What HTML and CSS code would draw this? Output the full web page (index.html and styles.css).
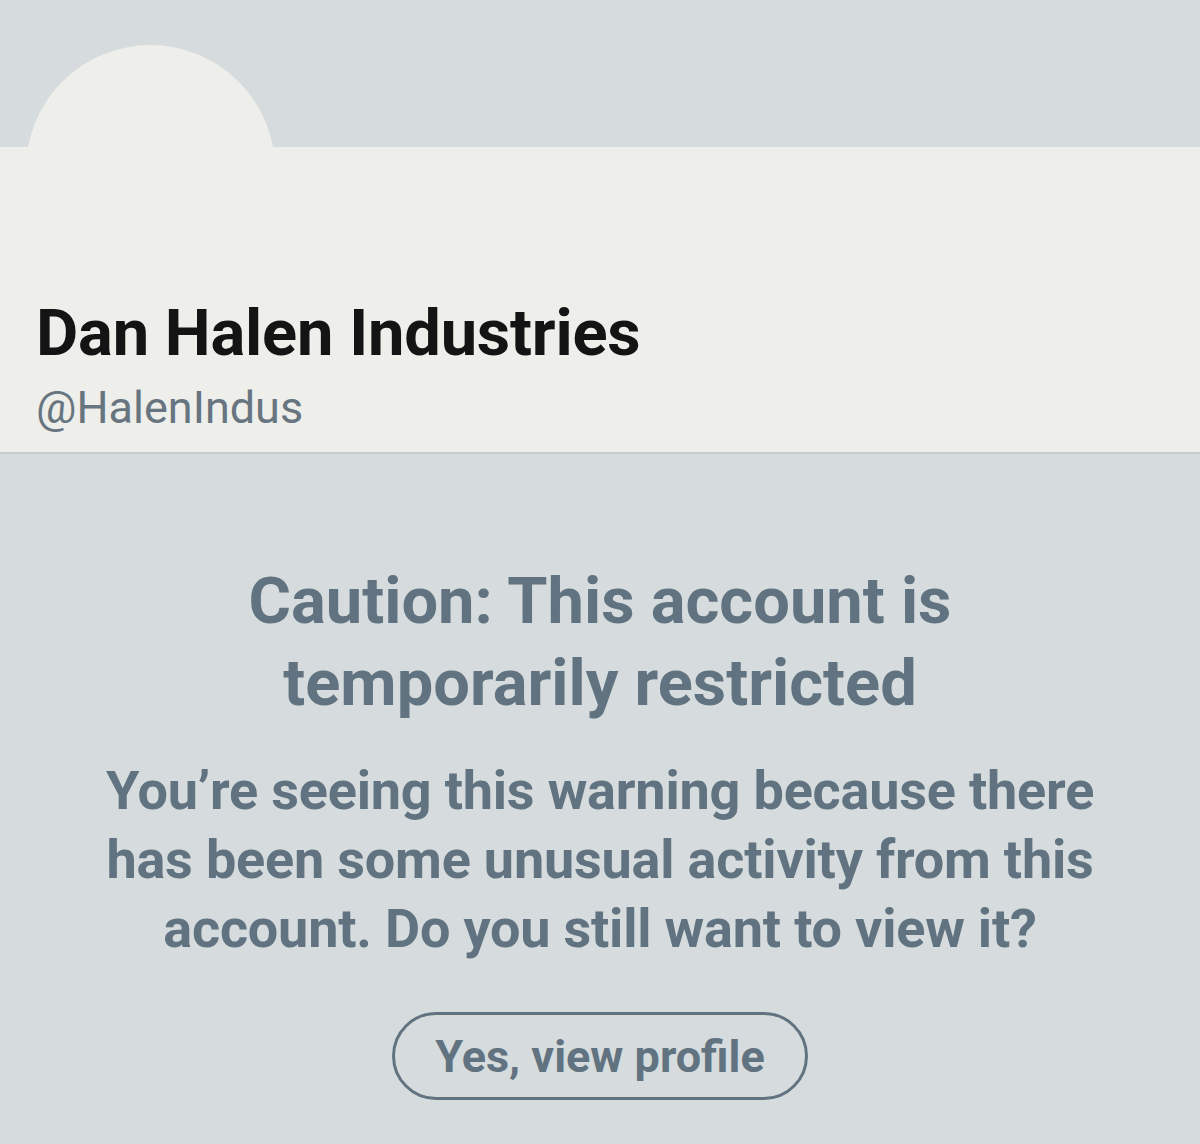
FILE: index.html
```html
<!DOCTYPE html>
<html>
<head>
<meta charset="utf-8">
<link rel="stylesheet" href="styles.css">
</head>
<body>
<div class="page">
  <div class="banner"></div>
  <div class="profile">
    <div class="avatar"></div>
    <h1 class="name">Dan Halen Industries</h1>
    <div class="handle">@HalenIndus</div>
  </div>
  <div class="warning">
    <h2 class="warn-title">Caution: This account is temporarily restricted</h2>
    <p class="warn-text">You’re seeing this warning because there has been some unusual activity from this account. Do you still want to view it?</p>
    <button class="view-btn">Yes, view profile</button>
  </div>
</div>
</body>
</html>
```
FILE: styles.css
```css
html, body {
  margin: 0;
  padding: 0;
  background: #d6dcdd;
}
body {
  font-family: Roboto, "Noto Sans", sans-serif;
  width: 1200px;
  height: 1144px;
  overflow: hidden;
}
.page {
  display: flex;
  flex-direction: column;
}
.banner {
  height: 147px;
  background: #d6dcdd;
}
.profile {
  position: relative;
  background: #eeeeea;
  height: 305px;
  border-bottom: 2px solid #c4cdd0;
  padding: 0 36px;
  display: flex;
  flex-direction: column;
}
.avatar {
  position: absolute;
  left: 26px;
  top: -102px;
  width: 249px;
  height: 249px;
  border-radius: 50%;
  background: #eeeeea;
}
.name {
  position: relative;
  margin: 148px 0 0;
  font-size: 65px;
  font-weight: 700;
  line-height: 76px;
  color: #141414;
  letter-spacing: -0.2px;
}
.handle {
  position: relative;
  margin-top: 11px;
  font-size: 45px;
  line-height: 52px;
  color: #66757f;
}
.warning {
  display: flex;
  flex-direction: column;
  align-items: center;
  text-align: center;
  padding: 106px 0 0;
  color: #617380;
}
.warn-title {
  margin: 0;
  font-size: 65px;
  font-weight: 700;
  line-height: 82px;
  max-width: 1000px;
}
.warn-text {
  margin: 32px 0 0;
  max-width: 1040px;
  font-size: 54px;
  font-weight: 700;
  line-height: 69px;
  letter-spacing: -0.2px;
}
.view-btn {
  box-sizing: border-box;
  margin-top: 49px;
  width: 416px;
  height: 88px;
  border: 3px solid #617380;
  border-radius: 44px;
  background: transparent;
  font-family: Roboto, "Noto Sans", sans-serif;
  font-size: 45px;
  font-weight: 700;
  color: #617380;
  padding: 0;
}
```
